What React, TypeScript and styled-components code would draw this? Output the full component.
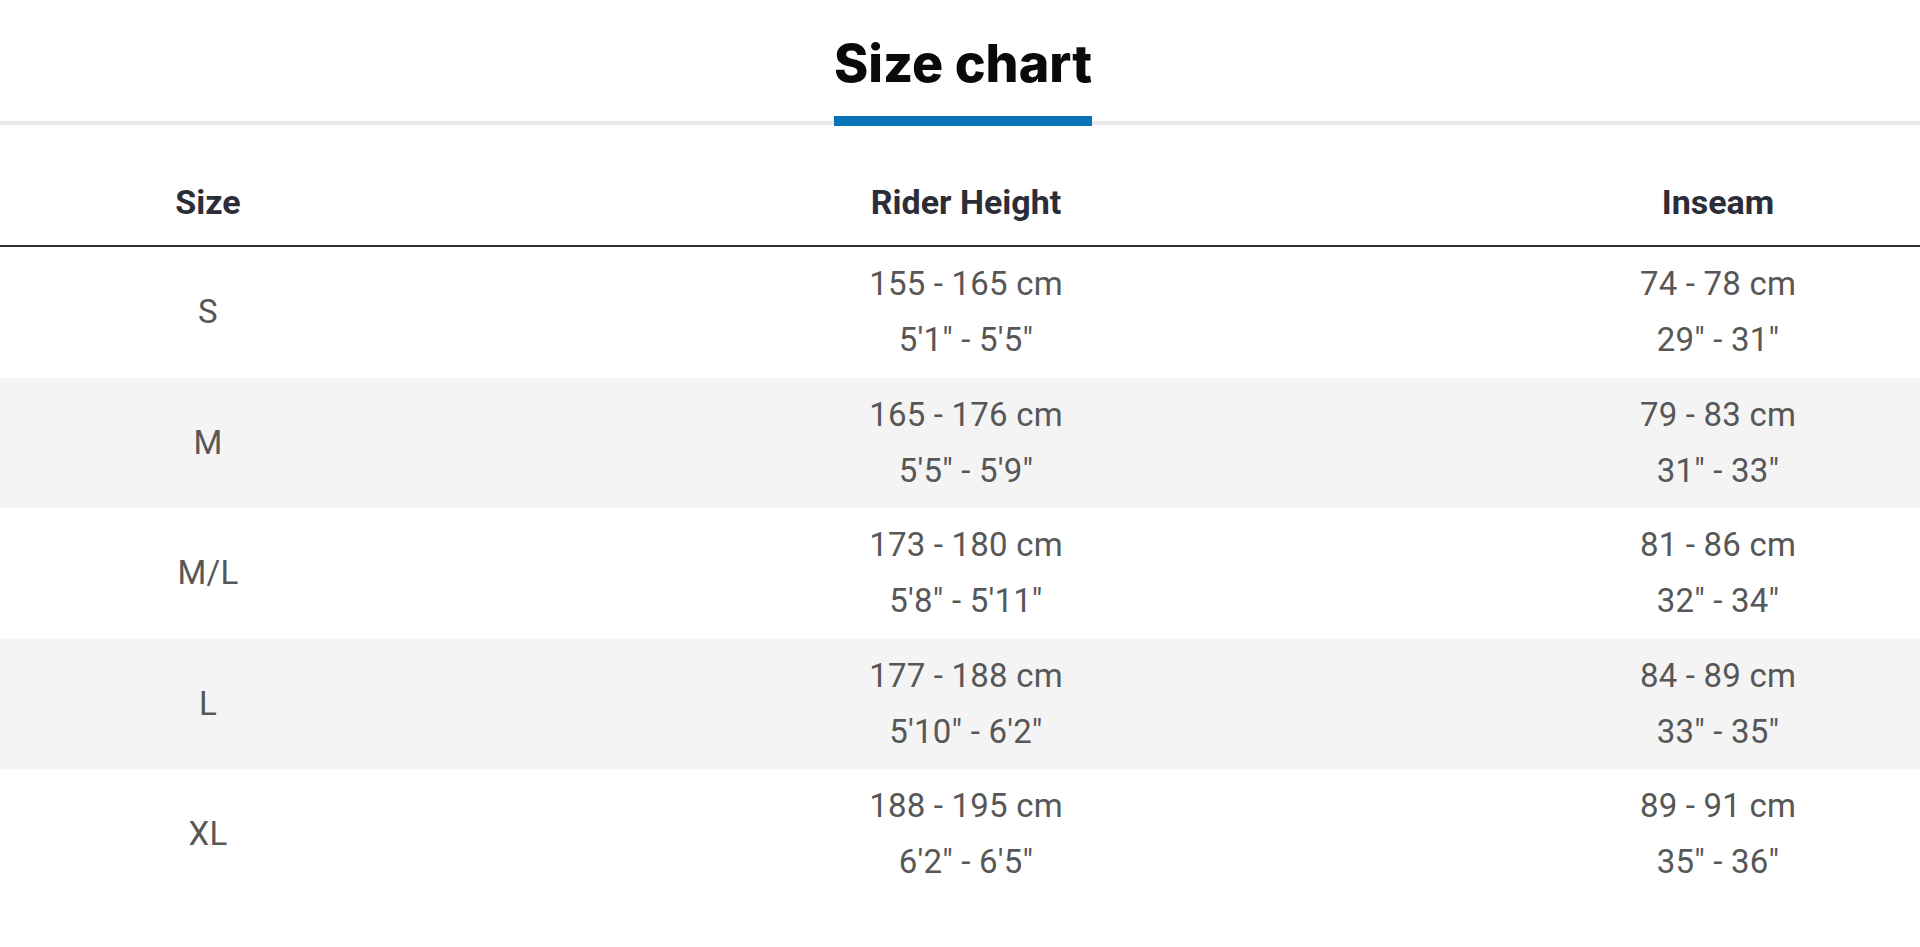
import React from "react";
import styled, { createGlobalStyle } from "styled-components";

const Global = createGlobalStyle`
  html, body { margin: 0; padding: 0; background: #ffffff; }
  body { font-family: Roboto, "Liberation Sans", sans-serif; }
`;

const Page = styled.div`
  width: 1920px;
  background: #fff;
`;

const TitleBar = styled.div`
  display: flex;
  justify-content: center;
  border-bottom: 4px solid #e9e9e9;
`;

const Tab = styled.h1`
  margin: 0 0 -5px 6px;
  padding: 37px 0 25px 0;
  font-family: Inter, "DejaVu Sans", sans-serif;
  font-weight: 800;
  font-size: 52px;
  line-height: 54px;
  color: #0a0a0a;
  border-bottom: 10px solid #0a72b9;
`;

const Table = styled.div`
  display: grid;
  grid-template-columns: 416px 1100px 1fr;
`;

const HeadCell = styled.div`
  height: 122px;
  display: flex;
  align-items: flex-end;
  justify-content: center;
  box-sizing: border-box;
  padding-bottom: 24px;
  border-bottom: 2px solid #2f2f2f;
  font-family: Roboto, "Liberation Sans", sans-serif;
  font-weight: 700;
  font-size: 34px;
  line-height: 38px;
  color: #2b2d38;
`;

const Cell = styled.div<{ $shade: boolean }>`
  height: 130.5px;
  display: flex;
  flex-direction: column;
  align-items: center;
  justify-content: center;
  background: ${(p) => (p.$shade ? "#f4f4f4" : "#ffffff")};
  font-family: Roboto, "Liberation Sans", sans-serif;
  font-weight: 400;
  font-size: 33px;
  line-height: 56px;
  letter-spacing: 0.2px;
  color: #575757;
`;

const Line = styled.span`
  display: block;
  white-space: pre;
`;

const rows = [
  { size: "S", height: ["155 - 165 cm", "5'1\" - 5'5\""], inseam: ["74 - 78 cm", "29\" - 31\""] },
  { size: "M", height: ["165 - 176 cm", "5'5\" - 5'9\""], inseam: ["79 - 83 cm", "31\" - 33\""] },
  { size: "M/L", height: ["173 - 180 cm", "5'8\" - 5'11\""], inseam: ["81 - 86 cm", "32\" - 34\""] },
  { size: "L", height: ["177 - 188 cm", "5'10\" - 6'2\""], inseam: ["84 - 89 cm", "33\" - 35\""] },
  { size: "XL", height: ["188 - 195 cm", "6'2\" - 6'5\""], inseam: ["89 - 91 cm", "35\" - 36\""] },
];

export default function App() {
  return (
    <Page>
      <Global />
      <TitleBar>
        <Tab>Size chart</Tab>
      </TitleBar>
      <Table>
        <HeadCell>Size</HeadCell>
        <HeadCell>Rider Height</HeadCell>
        <HeadCell>Inseam</HeadCell>
        {rows.map((r, i) => (
          <React.Fragment key={r.size}>
            <Cell $shade={i % 2 === 1}>
              <Line>{r.size}</Line>
            </Cell>
            <Cell $shade={i % 2 === 1}>
              {r.height.map((t) => (
                <Line key={t}>{t}</Line>
              ))}
            </Cell>
            <Cell $shade={i % 2 === 1}>
              {r.inseam.map((t) => (
                <Line key={t}>{t}</Line>
              ))}
            </Cell>
          </React.Fragment>
        ))}
      </Table>
    </Page>
  );
}
